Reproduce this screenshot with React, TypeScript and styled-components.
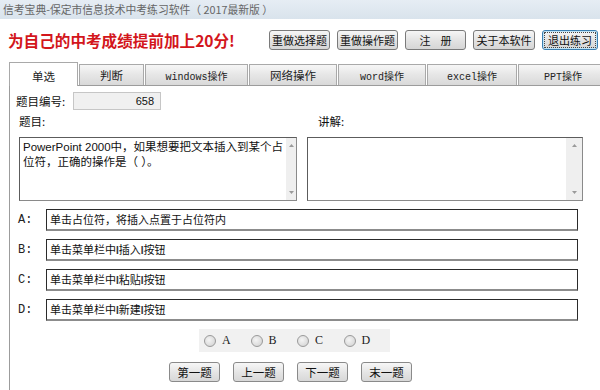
import styled, { createGlobalStyle } from "styled-components";

const CJK = `"Noto Sans CJK SC", "Liberation Sans", sans-serif`;
const MONO = `"Liberation Mono", "Noto Sans CJK SC", monospace`;

const GlobalStyle = createGlobalStyle`
  html, body {
    margin: 0;
    padding: 0;
    background: #fff;
  }
  body {
    font-family: ${CJK};
    color: #111;
  }
`;

const Window = styled.div`
  width: 600px;
  height: 390px;
  overflow: hidden;
  background: #fff;
`;

const TitleBar = styled.div`
  height: 19px;
  line-height: 19px;
  padding-left: 3px;
  background: linear-gradient(#e6edf4, #d9e3ec);
  color: #666;
  font-size: 10.8px;
  white-space: pre;
`;

const Header = styled.div`
  display: flex;
  align-items: center;
  height: 42px;
  padding: 0 2px 0 8px;
`;

const Headline = styled.div`
  font-size: 15.6px;
  font-weight: bold;
  color: #d3161c;
  white-space: nowrap;
`;

const ButtonRow = styled.div`
  display: flex;
  gap: 7px;
  margin-left: auto;
`;

const TopButton = styled.button<{ $w: number; $focus?: boolean }>`
  width: ${(p) => p.$w}px;
  height: 20px;
  padding: 0;
  font-family: ${CJK};
  font-size: 11px;
  color: #111;
  white-space: pre;
  background: linear-gradient(#f6f6f6, #e2e2e2 55%, #d6d6d6);
  border: 1px solid ${(p) => (p.$focus ? "#3c7fb1" : "#7a7a7a")};
  border-radius: 3px;
  outline: ${(p) => (p.$focus ? "1px dotted #444" : "none")};
  outline-offset: -3px;
  box-shadow: ${(p) => (p.$focus ? "inset 0 0 0 1px #bfe3f5" : "none")};
`;

const TabBar = styled.div`
  display: flex;
  align-items: flex-end;
  gap: 1px;
  height: 24px;
  padding-left: 9px;
  white-space: nowrap;
`;

const Tab = styled.div<{ $w: number; $active?: boolean; $mono?: boolean }>`
  position: relative;
  z-index: ${(p) => (p.$active ? 1 : 0)};
  flex: none;
  box-sizing: border-box;
  width: ${(p) => p.$w}px;
  height: ${(p) => (p.$active ? 24 : 21)}px;
  margin-bottom: ${(p) => (p.$active ? -1 : 0)}px;
  padding-top: ${(p) => (p.$active ? 2 : 0)}px;
  display: flex;
  align-items: center;
  justify-content: center;
  border: 1px solid #a9a9a9;
  border-bottom: none;
  background: ${(p) =>
    p.$active ? "#fff" : "linear-gradient(#f6f6f6, #e6e6e6 50%, #d9d9d9)"};
  font-family: ${(p) => (p.$mono ? MONO : CJK)};
  font-size: ${(p) => (p.$mono ? 10 : 11.5)}px;
  color: #222;
`;

const Panel = styled.div`
  margin-left: 9px;
  height: 305px;
  border-left: 1px solid #9c9c9c;
  border-top: 1px solid #9c9c9c;
  padding: 6px 0 0 6px;
`;

const IdRow = styled.div`
  display: flex;
  align-items: center;
  height: 18px;
`;

const FieldLabel = styled.span`
  width: 57px;
  font-size: 11.5px;
  color: #111;
`;

const IdInput = styled.div`
  box-sizing: border-box;
  width: 88px;
  height: 18px;
  padding-right: 6px;
  text-align: right;
  line-height: 16px;
  font-family: "Liberation Sans", sans-serif;
  font-size: 11px;
  background: #f0f0f0;
  border: 1px solid #c6c6c6;
`;

const TwoCols = styled.div<{ $top: number }>`
  display: grid;
  grid-template-columns: 278px 276px;
  column-gap: 10px;
  margin: ${(p) => p.$top}px 0 0 3px;
`;

const ColLabel = styled.span<{ $indent: number }>`
  padding-left: ${(p) => p.$indent}px;
  font-size: 11.5px;
  height: 14px;
  line-height: 14px;
`;

const TextBox = styled.div`
  box-sizing: border-box;
  height: 64px;
  display: flex;
  border: 1px solid #5c5c5c;
  border-right-color: #8a8a8a;
  border-bottom-color: #8a8a8a;
  background: #fff;
`;

const TextBody = styled.div`
  flex: 1;
  padding: 2px 3px;
  font-family: "Liberation Sans", "Noto Sans CJK SC", sans-serif;
  font-size: 11.5px;
  line-height: 15px;
  color: #111;
  white-space: pre;
`;

const ScrollTrack = styled.div`
  width: 16px;
  display: flex;
  flex-direction: column;
  justify-content: space-between;
  align-items: center;
  padding: 6px 0;
  background: #efefef;
`;

const Arrow = ({ down }: { down?: boolean }) => (
  <svg width="5" height="3" viewBox="0 0 5 3">
    <path d={down ? "M0 0h5L2.5 3z" : "M0 3h5L2.5 0z"} fill="#9a9a9a" />
  </svg>
);

const Answers = styled.div`
  display: flex;
  flex-direction: column;
  gap: 8px;
  margin-top: 8px;
`;

const AnswerRow = styled.div`
  display: flex;
  align-items: center;
  height: 22px;
`;

const AnswerKey = styled.span`
  width: 28px;
  padding-left: 2px;
  font-family: ${MONO};
  font-size: 12px;
  color: #222;
`;

const AnswerBox = styled.div`
  box-sizing: border-box;
  width: 532px;
  height: 22px;
  padding-left: 3px;
  line-height: 19px;
  font-size: 11px;
  border: 1px solid #2b2b2b;
  border-bottom: 2px solid #8c8c8c;
  white-space: nowrap;
`;

const Bar = styled.span`
  font-family: "Liberation Sans", sans-serif;
  font-weight: bold;
  font-size: 10px;
  color: #333;
`;

const RadioGroup = styled.div`
  display: flex;
  align-items: center;
  width: 191px;
  height: 23px;
  margin: 8px 0 0 183px;
  padding-left: 5px;
  box-sizing: border-box;
  background: #f1f1f1;
`;

const RadioItem = styled.label`
  display: flex;
  align-items: center;
  gap: 6px;
  width: 50px;
  font-family: "Liberation Serif", serif;
  font-size: 12px;
  color: #222;
`;

const RadioDot = styled.span`
  width: 10px;
  height: 10px;
  border-radius: 50%;
  border: 1px solid #9a9a9a;
  background: radial-gradient(circle at 40% 40%, #f4f4f4, #cfcfcf);
`;

const NavRow = styled.div`
  display: flex;
  gap: 13px;
  margin: 10px 0 0 153px;
`;

const NavButton = styled.button`
  width: 51px;
  height: 20px;
  padding: 0;
  font-family: ${CJK};
  font-size: 11.5px;
  color: #111;
  background: linear-gradient(#f7f7f7, #e4e4e4 55%, #d8d8d8);
  border: 1px solid #8a8a8a;
  border-radius: 3px;
`;

const tabs = [
  { label: "单选", w: 69 },
  { label: "判断", w: 65 },
  { label: "windows操作", w: 103, mono: true },
  { label: "网络操作", w: 88 },
  { label: "word操作", w: 88, mono: true },
  { label: "excel操作", w: 90, mono: true },
  { label: "PPT操作", w: 90, mono: true },
];

const answers: [string, React.ReactNode][] = [
  ["A:", "单击占位符，将插入点置于占位符内"],
  ["B:", <>单击菜单栏中<Bar>I</Bar>插入<Bar>I</Bar>按钮</>],
  ["C:", <>单击菜单栏中<Bar>I</Bar>粘贴<Bar>I</Bar>按钮</>],
  ["D:", <>单击菜单栏中<Bar>I</Bar>新建<Bar>I</Bar>按钮</>],
];

export default function App() {
  return (
    <Window>
      <GlobalStyle />
      <TitleBar>信考宝典-保定市信息技术中考练习软件（ 2017最新版 ）</TitleBar>
      <Header>
        <Headline>为自己的中考成绩提前加上20分!</Headline>
        <ButtonRow>
          <TopButton $w={61}>重做选择题</TopButton>
          <TopButton $w={61}>重做操作题</TopButton>
          <TopButton $w={61}>{"注    册"}</TopButton>
          <TopButton $w={62}>关于本软件</TopButton>
          <TopButton $w={56} $focus>退出练习</TopButton>
        </ButtonRow>
      </Header>

      <TabBar>
        {tabs.map((t, i) => (
          <Tab key={t.label} $w={t.w} $active={i === 0} $mono={t.mono}>
            {t.label}
          </Tab>
        ))}
      </TabBar>

      <Panel>
        <IdRow>
          <FieldLabel>题目编号:</FieldLabel>
          <IdInput>658</IdInput>
        </IdRow>

        <TwoCols $top={4}>
          <ColLabel $indent={0}>题目:</ColLabel>
          <ColLabel $indent={11}>讲解:</ColLabel>
        </TwoCols>

        <TwoCols $top={9}>
          <TextBox>
            <TextBody>
              {"PowerPoint 2000中，如果想要把文本插入到某个占\n位符，正确的操作是（ ）。"}
            </TextBody>
            <ScrollTrack>
              <Arrow />
              <Arrow down />
            </ScrollTrack>
          </TextBox>
          <TextBox>
            <TextBody />
            <ScrollTrack>
              <Arrow />
              <Arrow down />
            </ScrollTrack>
          </TextBox>
        </TwoCols>

        <Answers>
          {answers.map(([k, text]) => (
            <AnswerRow key={k}>
              <AnswerKey>{k}</AnswerKey>
              <AnswerBox>{text}</AnswerBox>
            </AnswerRow>
          ))}
        </Answers>

        <RadioGroup>
          {["A", "B", "C", "D"].map((l) => (
            <RadioItem key={l}>
              <RadioDot />
              {l}
            </RadioItem>
          ))}
        </RadioGroup>

        <NavRow>
          <NavButton>第一题</NavButton>
          <NavButton>上一题</NavButton>
          <NavButton>下一题</NavButton>
          <NavButton>末一题</NavButton>
        </NavRow>
      </Panel>
    </Window>
  );
}
